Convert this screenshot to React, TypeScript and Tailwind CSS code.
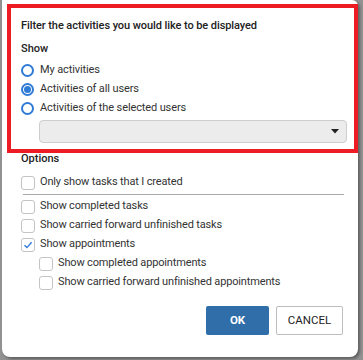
import React from "react";

function Radio({ checked, label }: { checked?: boolean; label: string }) {
  return (
    <div className="flex items-center h-[19px]">
      <span className="w-[13px] h-[13px] rounded-full border-2 border-[#2f7bd6] flex items-center justify-center box-border shrink-0">
        {checked && <span className="w-[7px] h-[7px] rounded-full bg-[#2f7bd6]" />}
      </span>
      <span className="ml-[6px] tracking-[-0.12px]">{label}</span>
    </div>
  );
}

function Check({ checked, label, indent }: { checked?: boolean; label: string; indent?: boolean }) {
  return (
    <div className={"flex items-center h-[19px] " + (indent ? "ml-[18px]" : "")}>
      <span className="w-[14px] h-[14px] rounded-[3px] border border-[#c4c4c4] bg-white flex items-center justify-center box-border shrink-0">
        {checked && (
          <svg width="10" height="10" viewBox="0 0 10 10">
            <path d="M1.5 5.2 L4 7.6 L8.6 2.2" fill="none" stroke="#2f7bd6" strokeWidth="1.4" />
          </svg>
        )}
      </span>
      <span className="ml-[5px] tracking-[-0.15px]">{label}</span>
    </div>
  );
}

export default function App() {
  return (
    <div className="relative w-[363px] h-[360px] bg-[#929292] overflow-hidden font-['Roboto',sans-serif] text-[11px] text-[#333]">
      <div className="ml-[2px] w-[356px] h-[357px] bg-white rounded-b-[8px] rounded-tr-[6px] pl-[19px] pr-[15px] pt-[17px] shadow-[2px_2px_3px_rgba(0,0,0,0.35)]">
        <div className="h-[18px] leading-[18px] font-medium text-[#222] tracking-[-0.08px]">Filter the activities you would like to be displayed</div>
        <div className="mt-[5px] h-[18px] leading-[18px] font-medium text-[#222]">Show</div>
        <div className="mt-[3px] flex flex-col">
          <Radio label="My activities" />
          <Radio label="Activities of all users" checked />
          <Radio label="Activities of the selected users" />
        </div>
        <div className="mt-[2px] ml-[18px] w-[308px] h-[23px] bg-[#ececec] border border-[#cdcdcd] rounded-[4px] flex items-center justify-end pr-[7px]">
          <svg width="8" height="5" viewBox="0 0 8 5">
            <path d="M0 0 H8 L4 4.5 Z" fill="#222" />
          </svg>
        </div>
        <div className="mt-[7px] h-[18px] leading-[18px] font-medium text-[#222]">Options</div>
        <div className="mt-[5px]">
          <Check label="Only show tasks that I created" />
        </div>
        <div className="mt-[2px] ml-[2px] w-[321px] h-px bg-[#a8a8a8]" />
        <div className="mt-[2px] flex flex-col">
          <Check label="Show completed tasks" />
          <Check label="Show carried forward unfinished tasks" />
          <Check label="Show appointments" checked />
          <Check label="Show completed appointments" indent />
          <Check label="Show carried forward unfinished appointments" indent />
        </div>
        <div className="mt-[14px] flex justify-end gap-[7px]">
          <button className="w-[63px] h-[29px] bg-[#2f6ea8] text-white font-bold text-[11.5px] rounded-[2px]">OK</button>
          <button className="w-[67px] h-[29px] bg-white border border-[#bdbdbd] text-[#222] text-[11.5px] rounded-[2px]">CANCEL</button>
        </div>
      </div>
      <div className="absolute left-[7px] top-[4px] w-[351px] h-[149px] border-[4px] border-[#ed1c24] pointer-events-none" />
    </div>
  );
}
